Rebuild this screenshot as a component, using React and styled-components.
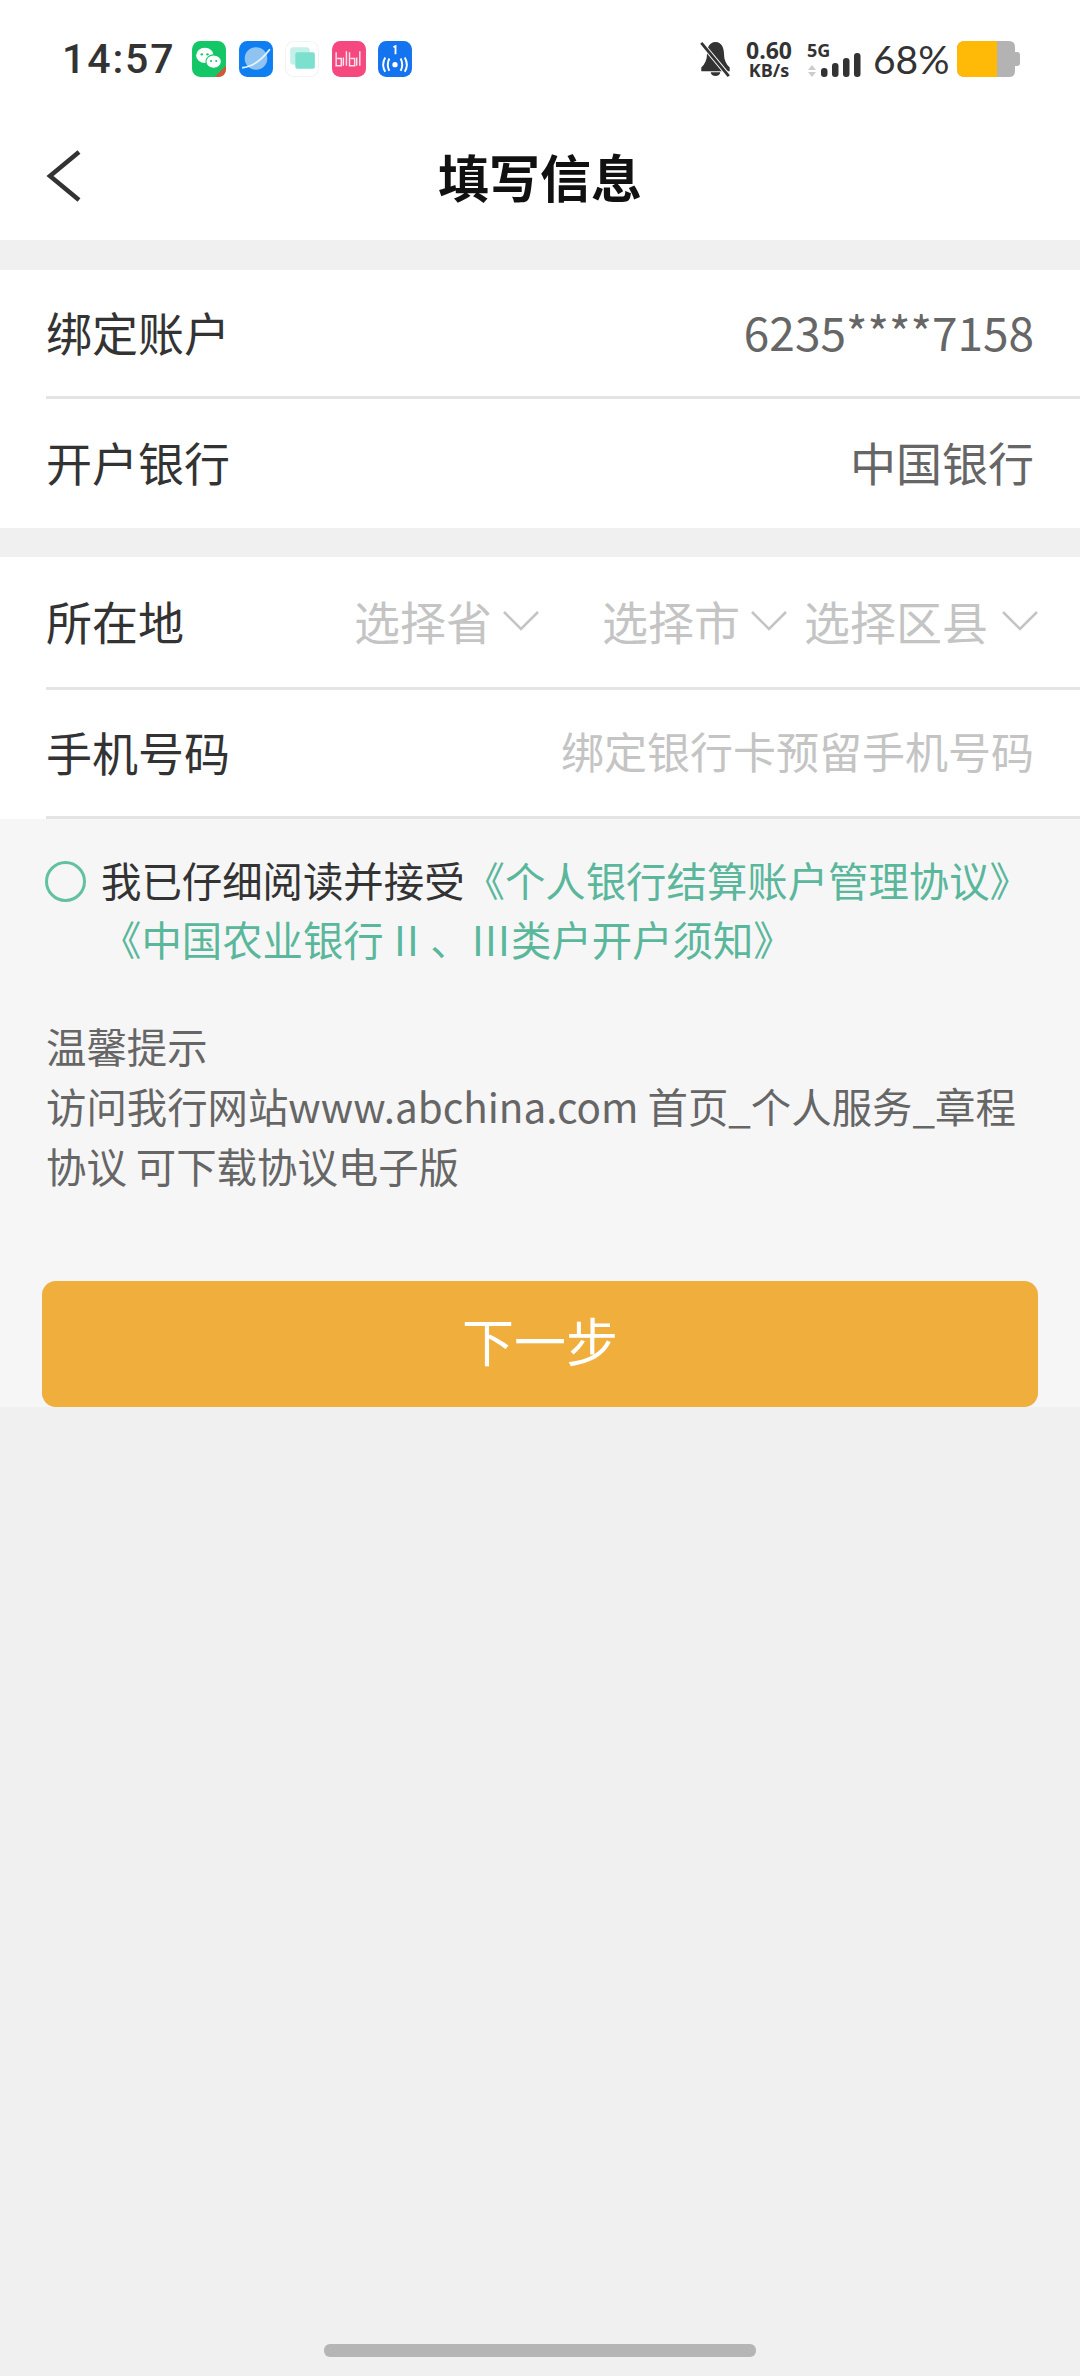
import React from "react";
import styled, { createGlobalStyle } from "styled-components";

const Global = createGlobalStyle`
  html, body { margin: 0; padding: 0; background: #f0f0f0; }
  body { font-family: "Noto Sans", "Noto Sans CJK SC", sans-serif; }
  * { box-sizing: border-box; }
`;
const CJK = `"Noto Sans CJK SC", "Noto Sans", sans-serif`;

const Page = styled.div`
  width: 1080px; height: 2376px; background: #f0f0f0; display: flex; flex-direction: column; overflow: hidden;
`;
const StatusBar = styled.div`
  height: 118px; background: #fff; display: flex; align-items: center; justify-content: space-between;
  padding: 0 60px 0 62px;
`;
const StatusLeft = styled.div`display: flex; align-items: center;`;
const Clock = styled.div`
  font: 500 41px/1 "Roboto", sans-serif; color: #333; letter-spacing: 1.9px; width: 130px;
`;
const AppIcons = styled.div`display: flex; gap: 12.5px; align-items: center;`;
const StatusRight = styled.div`display: flex; align-items: center;`;
const Speed = styled.div`
  display: flex; flex-direction: column; align-items: center; color: #333; font-family: "Open Sans", sans-serif; font-weight: 700;
  margin-left: 15px; width: 46px;
`;
const SpeedTop = styled.span`font-size: 23px; line-height: 22px;`;
const SpeedBottom = styled.span`font-size: 18px; line-height: 18px;`;
const Net = styled.div`margin-left: 15px; display: flex; flex-direction: column; width: 54px;`;
const NetLabel = styled.span`font: 700 18px/18px "Open Sans", sans-serif; color: #333;`;
const NetBars = styled.svg`display: block; margin-top: -6px;`;
const Percent = styled.div`font: 400 39px/1 "Lato", sans-serif; color: #333; margin: 0 10px 0 12px; width: 74px; white-space: nowrap;`;

const Header = styled.div`
  height: 122px; background: #fff; display: flex; align-items: center; justify-content: center; position: relative; padding-bottom: 5px;
`;
const Back = styled.div`position: absolute; left: 46px; top: 32px; display: flex;`;
const Title = styled.div`font: 700 51px/1 ${CJK}; color: #111;`;

const Section = styled.div`background: #fff; margin-top: ${p => p.$top}px;`;
const Row = styled.div`
  margin-left: 46px; height: ${p => p.$h}px; display: flex; align-items: center; justify-content: space-between;
  border-bottom: ${p => p.$line ? "3px solid #e4e4e4" : "none"}; padding: 0 46px 5px 0;
`;
const Label = styled.div`font: 400 46px/1 ${CJK}; color: #333; white-space: nowrap;`;
const Value = styled.div`font: 400 46px/1 ${CJK}; color: #666; white-space: nowrap;`;
const Placeholder = styled.div`font: 400 43px/1 ${CJK}; color: #c4c4c4; white-space: nowrap;`;
const Selects = styled.div`display: flex; align-items: center; margin-right: -5px;`;
const Select = styled.div`
  display: flex; align-items: center; gap: ${p => p.$inner}px; margin-left: ${p => p.$gap}px;
  font: 400 46px/1 ${CJK}; color: #c4c4c4; white-space: nowrap;
`;

const Lower = styled.div`
  background: #f6f6f6; height: 588px; padding-top: 31px; display: flex; flex-direction: column;
`;
const Agree = styled.div`position: relative; padding: 0 40px 0 46px;`;
const Radio = styled.div`
  position: absolute; left: 45px; top: 11px; width: 41px; height: 41px; border: 3px solid #62c0a3; border-radius: 50%;
`;
const AgreeLine = styled.div`
  font: 400 40.4px/59px ${CJK}; white-space: nowrap; color: #333; padding-left: 55px;
`;
const Link = styled.span`color: #5ab79b;`;
const Roman = styled.span`letter-spacing: 1.2px;`;
const Tips = styled.div`
  margin: 48px 0 0 46px; width: 1000px; font: 400 40.4px/60px ${CJK}; color: #666;
`;
const TipLine = styled.div`white-space: nowrap;`;
const NextBtn = styled.button`
  margin: auto 42px 0 42px; height: 126px; border: none; border-radius: 14px; background: #f0ae3c; color: #fff;
  font: 400 52px/1 ${CJK}; display: flex; align-items: center; justify-content: center; padding: 0 0 8px;
`;
const Spacer = styled.div`flex: 1; position: relative;`;
const HomeBar = styled.div`
  position: absolute; left: 324px; top: 937px; width: 432px; height: 13px; border-radius: 6px; background: #b5b5b5;
`;

const Tile = ({ children, bg = "#fff" }) => (
  <svg width="34" height="36" viewBox="0 0 33 35">
    <rect width="33" height="35" rx="8" fill={bg} />
    {children}
  </svg>
);

const Chevron = () => (
  <svg width="38" height="22" viewBox="0 0 38 22" fill="none">
    <path d="M2 3 L19 20 L36 3" stroke="#c4c4c4" strokeWidth="2.6" />
  </svg>
);

export default function App() {
  return (
    <Page>
      <Global />
      <StatusBar>
        <StatusLeft>
          <Clock>14:57</Clock>
          <AppIcons>
            <Tile bg="#13c766">
              <ellipse cx="12.5" cy="14" rx="8.5" ry="7.5" fill="#fff" />
              <ellipse cx="21" cy="20" rx="7.5" ry="6.5" fill="#fff" stroke="#13c766" />
              <circle cx="9.5" cy="13" r="1.2" fill="#13c766" />
              <circle cx="15" cy="13" r="1.2" fill="#13c766" />
              <circle cx="18.5" cy="19.5" r="1" fill="#13c766" />
              <circle cx="23.5" cy="19.5" r="1" fill="#13c766" />
              <path d="M22 35 L33 24 V27 Q33 35 25 35Z" fill="#d0573a" />
            </Tile>
            <Tile bg="#0f7ef0">
              <circle cx="16.5" cy="17" r="11" fill="#8fc3f2" />
              <path d="M3 26 Q17 25 30 8" stroke="#e6f3fd" strokeWidth="1.8" fill="none" />
            </Tile>
            <Tile bg="#fff">
              <rect x="0.5" y="0.5" width="32" height="34" rx="8" fill="none" stroke="#f2f4f4" />
              <rect x="5" y="6" width="19" height="17" rx="3" fill="#c3f1e8" />
              <rect x="10" y="11" width="19" height="16" rx="2" fill="#7ce0cf" />
            </Tile>
            <Tile bg="#f4487f">
              <path d="M4 11 V24 H9 V17 H5 M11 16 V24 M14 10 V24 M17 11 V24 H22 V17 H18 M24 16 V24 M27 10 V24" stroke="#ffe3ec" strokeWidth="1.4" fill="none" />
            </Tile>
            <Tile bg="#1473ee">
              <path d="M15 6 L17 5 V13" stroke="#fff" strokeWidth="1.8" fill="none" />
              <circle cx="16.5" cy="23" r="2.6" fill="#fff" />
              <path d="M11 17 Q8 23 11 29 M22 17 Q25 23 22 29 M7 16 Q3 23 7 30 M26 16 Q30 23 26 30" stroke="#fff" strokeWidth="1.9" fill="none" />
            </Tile>
          </AppIcons>
        </StatusLeft>
        <StatusRight>
          <svg width="31" height="36" viewBox="0 0 32 38">
            <path d="M16 1 C23 1 25 8 25 14 C25 20 27 24 31 28 V32 H1 V28 C5 24 7 20 7 14 C7 8 9 1 16 1Z" fill="#333" />
            <path d="M11 33 H21 A5 4 0 0 1 11 33Z" fill="#333" />
            <path d="M1 2 L30 37" stroke="#fff" strokeWidth="5" />
            <path d="M1 2 L30 37" stroke="#333" strokeWidth="3" />
          </svg>
          <Speed>
            <SpeedTop>0.60</SpeedTop>
            <SpeedBottom>KB/s</SpeedBottom>
          </Speed>
          <Net>
            <NetLabel>5G</NetLabel>
            <NetBars width="54" height="24" viewBox="0 0 54 24">
              <path d="M5 12 L9 17 H1Z M5 24 L9 19 H1Z" fill="#ccc" />
              <rect x="14" y="15" width="6.5" height="9" rx="3" fill="#333" />
              <rect x="25" y="10" width="6.5" height="14" rx="3" fill="#333" />
              <rect x="36" y="5" width="6.5" height="19" rx="3" fill="#333" />
              <rect x="47" y="0" width="6.5" height="24" rx="3" fill="#333" />
            </NetBars>
          </Net>
          <Percent>68%</Percent>
          <svg width="63" height="36" viewBox="0 0 63 36">
            <path d="M8 0 H52 Q58 0 58 6 V11 H60 Q63 11 63 14 V22 Q63 25 60 25 H58 V30 Q58 36 52 36 H8 Q0 36 0 28 V8 Q0 0 8 0Z" fill="#b3b3b3" />
            <path d="M8 0 H40 V36 H8 Q0 36 0 28 V8 Q0 0 8 0Z" fill="#ffb907" />
          </svg>
        </StatusRight>
      </StatusBar>
      <Header>
        <Back>
          <svg width="36" height="52" viewBox="0 0 36 52" fill="none">
            <path d="M33 2 L4 26 L33 50" stroke="#333" strokeWidth="4.5" />
          </svg>
        </Back>
        <Title>填写信息</Title>
      </Header>
      <Section $top={30}>
        <Row $h={129} $line><Label>绑定账户</Label><Value>6235****7158</Value></Row>
        <Row $h={129}><Label>开户银行</Label><Value>中国银行</Value></Row>
      </Section>
      <Section $top={29}>
        <Row $h={133} $line>
          <Label>所在地</Label>
          <Selects>
            <Select $gap={0} $inner={10}>选择省<Chevron /></Select>
            <Select $gap={62} $inner={10}>选择市<Chevron /></Select>
            <Select $gap={16} $inner={13}>选择区县<Chevron /></Select>
          </Selects>
        </Row>
        <Row $h={129} $line><Label>手机号码</Label><Placeholder>绑定银行卡预留手机号码</Placeholder></Row>
      </Section>
      <Lower>
        <Agree>
          <Radio />
          <AgreeLine>我已仔细阅读并接受<Link>《个人银行结算账户管理协议》</Link></AgreeLine>
          <AgreeLine><Link>《中国农业银行<Roman> II 、III</Roman>类户开户须知》</Link></AgreeLine>
        </Agree>
        <Tips>
          <TipLine>温馨提示</TipLine>
          <TipLine>访问我行网站www.abchina.com 首页_个人服务_章程</TipLine>
          <TipLine>协议 可下载协议电子版</TipLine>
        </Tips>
        <NextBtn>下一步</NextBtn>
      </Lower>
      <Spacer><HomeBar /></Spacer>
    </Page>
  );
}
